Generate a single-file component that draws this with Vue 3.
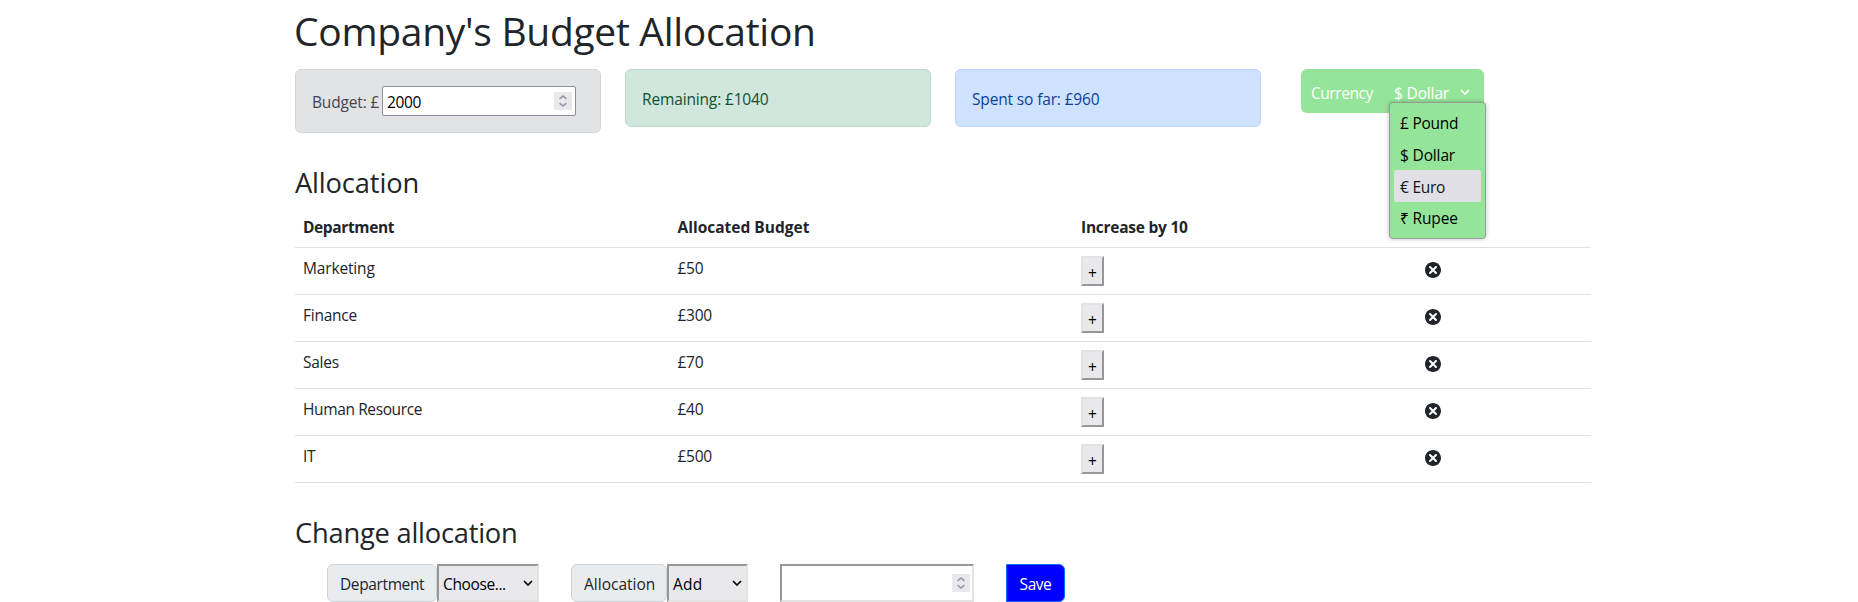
<script setup>
import { ref } from 'vue'

const budget = ref(2000)
const amount = ref('')
const currencies = [
  { label: '£ Pound', fit: 'mid' },
  { label: '$ Dollar', fit: 'slight' },
  { label: '€ Euro', fit: 'mid', active: true },
  { label: '₹ Rupee', fit: 'slight' },
]
const expenses = [
  { name: 'Marketing', cost: 50, fit: 'slight' },
  { name: 'Finance', cost: 300, fit: 'mid' },
  { name: 'Sales', cost: 70, fit: 'mid' },
  { name: 'Human Resource', cost: 40, fit: 'snug' },
  { name: 'IT', cost: 500, fit: 'mid' },
]
</script>

<template>
  <main class="container">
    <h1>Company's Budget Allocation</h1>
    <section class="summary">
      <div class="alert secondary">
        <span class="slight">Budget: £</span>
        <label class="number budget">
          <input v-model="budget" class="snug" type="text" />
          <svg class="spinner" viewBox="0 0 18 18"><path d="M5.6 6.9 9 4l3.4 2.9M5.6 11.1 9 14l3.4-2.9" /></svg>
        </label>
      </div>
      <div class="alert success"><span class="slight">Remaining: £1040</span></div>
      <div class="alert primary"><span class="slight">Spent so far: £960</span></div>
      <div class="currency">
        <span class="currency-label tight">Currency</span>
        <span class="slight">$ Dollar</span>
        <svg class="chevron" viewBox="0 0 10 6"><path d="M1 1l4 4 4-4" /></svg>
        <ul class="menu">
          <li v-for="c in currencies" :key="c.label" :class="[c.fit, { active: c.active }]">{{ c.label }}</li>
        </ul>
      </div>
    </section>

    <h2>Allocation</h2>
    <div class="table">
      <div class="row head">
        <span class="snug">Department</span>
        <span>Allocated Budget</span>
        <span class="mid">Increase by 10</span>
        <span></span>
      </div>
      <div v-for="e in expenses" :key="e.name" class="row">
        <span :class="e.fit">{{ e.name }}</span>
        <span class="mid">£{{ e.cost }}</span>
        <span><button class="plus">+</button></span>
        <span>
          <svg class="delete" viewBox="4 4 16 16"><path d="M12 4c-4.419 0-8 3.582-8 8s3.581 8 8 8 8-3.582 8-8-3.581-8-8-8zm3.707 10.293c.391.391.391 1.023 0 1.414-.195.195-.451.293-.707.293s-.512-.098-.707-.293l-2.293-2.293-2.293 2.293c-.195.195-.451.293-.707.293s-.512-.098-.707-.293c-.391-.391-.391-1.023 0-1.414l2.293-2.293-2.293-2.293c-.391-.391-.391-1.023 0-1.414s1.023-.391 1.414 0l2.293 2.293 2.293-2.293c.391-.391 1.023-.391 1.414 0s.391 1.023 0 1.414l-2.293 2.293 2.293 2.293z" /></svg>
        </span>
      </div>
    </div>

    <h2 class="change">Change allocation</h2>
    <section class="form">
      <div class="group department">
        <span class="addon snug">Department</span>
        <div class="select"><span class="snug">Choose...</span><svg class="chevron" viewBox="0 0 10 6"><path d="M1 1l4 4 4-4" /></svg></div>
      </div>
      <div class="group allocation">
        <span class="addon">Allocation</span>
        <div class="select"><span class="wide">Add</span><svg class="chevron" viewBox="0 0 10 6"><path d="M1 1l4 4 4-4" /></svg></div>
      </div>
      <label class="number amount">
        <input v-model="amount" type="text" />
        <svg class="spinner" viewBox="0 0 18 18"><path d="M5.6 6.9 9 4l3.4 2.9M5.6 11.1 9 14l3.4-2.9" /></svg>
      </label>
      <button class="save tight">Save</button>
    </section>
  </main>
</template>

<style>
body {
  margin: 0;
  background: #fff;
  overflow: hidden;
}
</style>

<style scoped>
* {
  box-sizing: border-box;
}
.container {
  width: 1296px;
  margin-left: 295px;
  height: 602px;
  padding-top: 7px;
  font: 15.5px/24px "Open Sans", "Noto Sans", sans-serif;
  color: #212529;
}
.slight { letter-spacing: -0.15px; }
.mid { letter-spacing: -0.25px; }
.snug { letter-spacing: -0.38px; }
.tight { letter-spacing: -0.45px; }
.wide { letter-spacing: 0.2px; }
h1 {
  margin: 0 0 14px -1px;
  font-size: 39px;
  line-height: 48px;
  font-weight: 400;
  letter-spacing: -0.3px;
}
h2 {
  margin: 0 0 7px;
  font-size: 27.3px;
  line-height: 34px;
  font-weight: 400;
  letter-spacing: -0.15px;
}
h2.change {
  margin: 33px 0 14px;
  letter-spacing: -0.23px;
}
.summary {
  display: flex;
  align-items: flex-start;
  height: 97px;
}
.alert {
  width: 306px;
  height: 58px;
  margin-right: 24px;
  padding: 2px 16px 0;
  border: 1px solid;
  border-radius: 6px;
  display: flex;
  align-items: center;
}
.secondary {
  height: 64px;
  background: #e2e3e5;
  border-color: #d3d6d8;
  padding-top: 0;
}
.secondary > span {
  color: #41464b;
  padding-top: 2px;
  width: 70px;
  white-space: nowrap;
}
.success { background: #d1e7dd; border-color: #badbcc; }
.success span { color: #0f5132; }
.primary { background: #cfe2ff; border-color: #b6d4fe; }
.primary span { color: #084298; }
.number {
  display: flex;
  align-items: center;
  width: 194px;
  background: #fff;
}
.number input {
  flex: 1;
  min-width: 0;
  height: 26px;
  padding: 2px 0 0;
  border: 0;
  outline: 0;
  background: none;
  font: inherit;
  color: #000;
}
.budget {
  height: 30px;
  border: 1px solid #8f8f9d;
  border-radius: 2px;
  padding: 0 3px 0 4px;
}
.spinner {
  width: 18px;
  height: 18px;
  background: #e9e9ed;
}
.spinner path {
  fill: none;
  stroke: #9595a2;
  stroke-width: 1.6;
}
.budget .spinner { margin-top: -1px; }
.currency {
  position: relative;
  display: flex;
  align-items: center;
  width: 183px;
  height: 44px;
  margin-left: 16px;
  padding: 3px 0 0 10px;
  border-radius: 6px;
  background: #94e599;
  color: #fff;
  white-space: nowrap;
}
.currency-label { width: 83px; }
.chevron {
  width: 10px;
  height: 6px;
  margin-left: auto;
  fill: none;
  stroke: currentColor;
  stroke-width: 1.7;
}
.currency .chevron { margin: 0 14px 1px auto; }
.menu {
  position: absolute;
  left: 88px;
  top: 33px;
  width: 97px;
  height: 137px;
  margin: 0;
  padding: 3px 4px;
  list-style: none;
  border: 1px solid #979c98;
  border-radius: 4px;
  background: #94e599;
  color: #000;
  box-shadow: 0 0 4px rgba(0, 0, 0, 0.25);
}
.menu li {
  height: 32px;
  padding: 1px 0 0 6px;
  line-height: 32px;
  border-radius: 2px;
}
.menu li:last-child { margin-top: -1px; }
.menu .active { background: #e0e0e6; color: #15141a; }
.row {
  display: grid;
  grid-template-columns: 374.5px 403.5px 344px 1fr;
  height: 47px;
  padding: 8px 0 0 8px;
  border-bottom: 1px solid #dee2e6;
}
.row.head {
  height: 41px;
  font-weight: 700;
}
.plus {
  display: block;
  width: 23px;
  height: 30px;
  padding: 3px 0 0;
  border: 2px solid;
  border-color: #e3e3e3 #979797 #979797 #e3e3e3;
  background: #e9e9ed;
  font: inherit;
  line-height: 20px;
  color: #000;
}
.delete {
  display: block;
  width: 16px;
  height: 16px;
  margin-top: 6px;
  fill: #212529;
}
.form {
  display: flex;
  height: 38px;
  padding-left: 32px;
}
.group { display: flex; }
.department { width: 212px; margin-right: 32px; }
.allocation { width: 177px; margin-right: 32px; }
.addon {
  width: 110px;
  padding: 7px 0 0 12px;
  border: 1px solid #ced4da;
  border-radius: 6px;
  background: #e9ecef;
}
.allocation .addon { width: 96px; }
.select {
  flex: 1;
  display: flex;
  align-items: center;
  padding: 2px 4px 0;
  border: 2px solid;
  border-color: #979797 #e3e3e3 #e3e3e3 #979797;
  background: #e9e9ed;
  color: #000;
}
.select .chevron { margin-bottom: 2px; }
.amount {
  border: 2px solid;
  border-color: #979797 #e3e3e3 #e3e3e3 #979797;
  padding-right: 2px;
  margin-right: 32px;
}
.save {
  width: 59px;
  padding: 1px 0 0;
  border: 1px solid #0d6efd;
  border-radius: 0 6px 6px 0;
  background: #00f;
  color: #fff;
  font: inherit;
}
</style>
